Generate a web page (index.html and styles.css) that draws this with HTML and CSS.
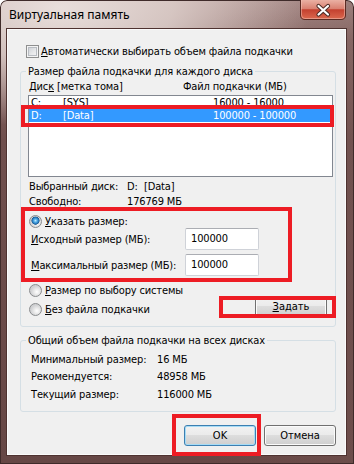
FILE: index.html
```html
<!DOCTYPE html>
<html lang="ru">
<head>
<meta charset="utf-8">
<title>Виртуальная память</title>
<link rel="stylesheet" href="styles.css">
</head>
<body>
<div class="window">
  <div class="titlebar">
    <span class="title">Виртуальная память</span>
    <div class="close">
      <svg width="46" height="20" viewBox="0 0 46 20">
        <defs>
          <linearGradient id="cg" x1="0" y1="0" x2="0" y2="1">
            <stop offset="0" stop-color="#eab0a3"/>
            <stop offset="0.45" stop-color="#d98070"/>
            <stop offset="0.5" stop-color="#c4412f"/>
            <stop offset="1" stop-color="#dc6a50"/>
          </linearGradient>
        </defs>
        <path d="M0.5 0 V15 Q0.5 19.5 5 19.5 H41 Q45.5 19.5 45.5 15 V0" fill="url(#cg)" stroke="#5b2b23"/>
        <path d="M1.5 0 V15 Q1.5 18.5 5 18.5 H41 Q44.5 18.5 44.5 15 V0" fill="none" stroke="#f4c8bc" stroke-opacity="0.5"/>
        <path d="M18.5 6 L28 14.5 M28 6 L18.5 14.5" stroke="#4b2a24" stroke-width="4.2" stroke-linecap="round"/>
        <path d="M18.5 6 L28 14.5 M28 6 L18.5 14.5" stroke="#ffffff" stroke-width="2.2" stroke-linecap="round"/>
      </svg>
    </div>
  </div>

  <div class="client">
    <div class="check-row">
      <span class="checkbox"></span>
      <span><u>А</u>втоматически выбирать объем файла подкачки</span>
    </div>

    <fieldset class="group group-disks">
      <legend>Размер файла подкачки для каждого диска</legend>
      <div class="list-head">
        <span class="col-disk">Дис<u>к</u> [метка тома]</span>
        <span>Файл подкачки (МБ)</span>
      </div>
      <div class="listbox">
        <div class="list-row">
          <span class="c-drive">C:</span><span class="c-label">[SYS]</span><span>16000 - 16000</span>
        </div>
        <div class="list-row selected">
          <span class="c-drive">D:</span><span class="c-label">[Data]</span><span>100000 - 100000</span>
        </div>
      </div>
      <div class="info-row first">
        <span class="info-label">Выбранный диск:</span>
        <span class="info-drive">D:</span><span>[Data]</span>
      </div>
      <div class="info-row">
        <span class="info-label">Свободно:</span>
        <span>176769 МБ</span>
      </div>

      <div class="radio-row radio-custom">
        <span class="radio checked"></span>
        <span><u>У</u>казать размер:</span>
      </div>
      <div class="edit-row">
        <span class="edit-label"><u>И</u>сходный размер (МБ):</span>
        <span class="edit">100000</span>
      </div>
      <div class="edit-row second">
        <span class="edit-label"><u>М</u>аксимальный размер (МБ):</span>
        <span class="edit">100000</span>
      </div>

      <div class="option-block">
        <div class="option-col">
          <div class="radio-row">
            <span class="radio"></span>
            <span><u>Р</u>азмер по выбору системы</span>
          </div>
          <div class="radio-row next">
            <span class="radio"></span>
            <span><u>Б</u>ез файла подкачки</span>
          </div>
        </div>
        <button class="btn btn-set" type="button"><u>З</u>адать</button>
      </div>
    </fieldset>

    <fieldset class="group group-total">
      <legend>Общий объем файла подкачки на всех дисках</legend>
      <div class="total-row r1"><span class="total-label">Минимальный размер:</span><span>16 МБ</span></div>
      <div class="total-row r2"><span class="total-label">Рекомендуется:</span><span>48958 МБ</span></div>
      <div class="total-row r3"><span class="total-label">Текущий размер:</span><span>116000 МБ</span></div>
    </fieldset>

    <div class="buttons">
      <button class="btn btn-default" type="button">OK</button>
      <button class="btn" type="button">Отмена</button>
    </div>
  </div>

  <div class="mark mark-row"></div>
  <div class="mark mark-size"></div>
  <div class="mark mark-set"></div>
  <div class="mark mark-ok"></div>
</div>
</body>
</html>
```

FILE: styles.css
```css
* { box-sizing: border-box; }

html, body {
  margin: 0;
  padding: 0;
}

body {
  width: 354px;
  height: 464px;
  overflow: hidden;
  background: #ffffff;
  font-family: "DejaVu Sans Condensed", "DejaVu Sans", sans-serif;
  font-size: 11px;
  line-height: 13px;
  letter-spacing: -0.15px;
  color: #000;
}

u { text-decoration: underline; text-underline-offset: 1px; }

.window {
  position: relative;
  width: 354px;
  height: 464px;
  padding: 0 8px 9px 7px;
  display: flex;
  flex-direction: column;
  border-radius: 7px 7px 0 0;
  background:
    radial-gradient(ellipse 250px 120px at 60px 8px, rgba(232, 222, 219, 1) 0%, rgba(222, 208, 204, 0.85) 45%, rgba(200, 178, 174, 0) 100%),
    linear-gradient(90deg, rgba(0,0,0,0) 0, rgba(0,0,0,0) 60%, rgba(120, 88, 85, 0.35) 100%),
    linear-gradient(180deg, #b09491 0, #8e6e6b 40px, #6f4f4d 140px, #664745 100%);
  box-shadow: inset 0 0 0 1px #3f2b2a;
}

.titlebar {
  height: 29px;
  flex: none;
  display: flex;
  justify-content: space-between;
  align-items: flex-start;
}

.title {
  margin: 8px 0 0 2px;
  font-family: "Noto Sans", "DejaVu Sans", sans-serif;
  font-size: 12px;
  line-height: 14px;
  letter-spacing: 0;
  color: #000;
}

.close {
  width: 46px;
  height: 20px;
  display: flex;
}

.client {
  flex: 1;
  padding: 0 9px 0 12px;
  background: #f0f0f0;
  border: 1px solid #fbfbfb;
  box-shadow: 0 0 0 1px #4e3230;
}

.check-row {
  margin: 15px 0 0 6px;
  height: 13px;
  display: flex;
  align-items: center;
  gap: 2px;
}

.checkbox {
  width: 13px;
  height: 13px;
  border: 1px solid #8e8f8f;
  background: linear-gradient(135deg, #c6cad0 0%, #e6e7e9 55%, #f8f8f8 100%);
  box-shadow: inset 0 0 0 1px #f4f4f4, inset 0 0 0 2px #b8bcc2;
}

.group {
  margin: 0;
  min-width: 0;
  border: 1px solid #d5dfe5;
  border-radius: 3px;
}

.group legend {
  padding: 0 2px;
  line-height: 13px;
}

.group-disks {
  margin-top: 7px;
  padding: 0 1px 9px 7px;
}

.group-disks legend { margin-left: -2px; }

.list-head {
  margin-top: 2px;
  padding-left: 1px;
  display: flex;
}

.col-disk { width: 154px; }

.listbox {
  margin-top: 2px;
  height: 82px;
  border: 1px solid #828790;
  background: #fff;
  margin-right: 1px;
}

.list-row {
  height: 13px;
  padding-left: 2px;
  display: flex;
}

.list-row.selected {
  background: #3399ff;
  color: #fff;
}

.c-drive { width: 32px; }
.c-label { width: 150px; }

.info-row {
  margin-top: 2px;
  padding-left: 1px;
  display: flex;
}

.info-row.first { margin-top: 3px; }

.info-label { width: 98px; }
.info-drive { width: 17px; }

.radio-row {
  height: 13px;
  padding-left: 1px;
  display: flex;
  align-items: center;
  gap: 3px;
}

.radio-custom { margin-top: 7px; }

.radio {
  width: 13px;
  height: 13px;
  border-radius: 50%;
  border: 1px solid #8a8c8e;
  background: radial-gradient(circle at 62% 62%, #ffffff 0, #ececec 2.5px, #cfd0d2 6px);
}

.radio.checked {
  background:
    radial-gradient(circle at 50% 42%, #c8ecfd 0, #58b3ea 1.5px, #2a7cc0 3px, #1d5a8e 3.8px, rgba(29, 90, 142, 0) 4.3px),
    radial-gradient(circle at 62% 62%, #ffffff 0, #ececec 2.5px, #cfd0d2 6px);
}

.edit-row {
  height: 22px;
  display: flex;
  align-items: center;
}

.edit-row.second { margin-top: 4px; }

.edit-label {
  width: 157px;
  padding-left: 3px;
}

.edit {
  width: 74px;
  height: 22px;
  padding-left: 5px;
  line-height: 20px;
  background: #fff;
  border: 1px solid #cfd2d8;
  border-top-color: #abadb3;
  border-radius: 2px;
}

.option-block {
  margin-top: 8px;
  display: flex;
  justify-content: space-between;
}

.option-col { padding-bottom: 1px; }

.radio-row.next { margin-top: 6px; }

.btn {
  width: 72px;
  height: 21px;
  padding: 0;
  font: inherit;
  line-height: 19px;
  color: #000;
  text-align: center;
  border: 1px solid #707070;
  border-radius: 3px;
  background: linear-gradient(180deg, #f2f2f2 0%, #ebebeb 46%, #dddddd 50%, #cfcfcf 100%);
  box-shadow: inset 0 0 0 1px #fbfbfb;
}

.btn-set {
  align-self: flex-end;
  margin-right: 7px;
}

.btn-default {
  border-color: #3c7fb1;
  box-shadow: inset 0 0 0 1px #a6dcf6;
}

.group-total {
  margin-top: 7px;
  padding: 0 0 10px 10px;
}

.group-total legend { margin-left: -5px; }

.total-row {
  display: flex;
}

.total-row.r1 { margin-top: 6px; }
.total-row.r2 { margin-top: 4px; }
.total-row.r3 { margin-top: 5px; }

.total-label { width: 126px; }

.buttons {
  margin-top: 13px;
  display: flex;
  justify-content: flex-end;
  gap: 8px;
}

.mark {
  position: absolute;
  border: 4px solid #ed1c24;
}

.mark-row  { left: 21px;  top: 105px; width: 313px; height: 22px; }
.mark-size { left: 21px;  top: 207px; width: 271px; height: 75px; }
.mark-set  { left: 219px; top: 296px; width: 117px; height: 22px; }
.mark-ok   { left: 172px; top: 414px; width: 89px;  height: 42px; }
```
